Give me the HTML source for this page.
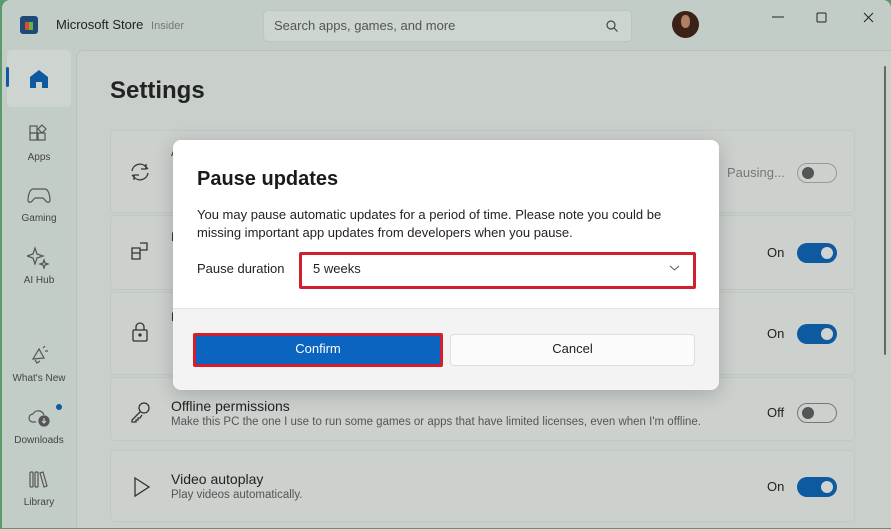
<!DOCTYPE html>
<html><head><style>
*{margin:0;padding:0;box-sizing:border-box}
body{width:891px;height:529px;overflow:hidden;background:#5a9a6a;font-family:"Segoe UI","Liberation Sans",sans-serif;position:relative}
.win{position:absolute;left:2px;top:0;width:889px;height:528px;background:#c3cdc7;border-radius:8px 8px 0 0;overflow:hidden}
.t{position:absolute;white-space:nowrap}
.content{position:absolute;left:74px;top:50px;right:0;bottom:0;background:#c9cfcb;border-top-left-radius:8px;border-top:1px solid #b9c1bc;border-left:1px solid #b9c1bc}
.card{position:absolute;left:108px;width:745px;background:#cdd1ce;border:1px solid #c2c7c4;border-radius:5px}
.tog{position:absolute;width:40px;height:20px;border-radius:10px;background:#0e5aa0}
.tog::after{content:"";position:absolute;right:4px;top:4px;width:12px;height:12px;border-radius:6px;background:#d0d3d1}
.off{background:transparent;border:1px solid #777}
.off::after{left:4px;right:auto;top:3px;background:#555}
.nav{position:absolute;width:74px;text-align:center;font-size:10px;color:#444}
svg{position:absolute}
</style></head><body>
<div class="win">
 <div style="position:absolute;left:18px;top:16px;width:18px;height:18px;background:#1e4a7a;border-radius:3px"></div>
 <div style="position:absolute;left:23px;top:22px;width:8px;height:8px;background:linear-gradient(90deg,#e04a2a 50%,#6ab04a 50%)"></div>
 <div class="t" style="left:54px;top:17px;font-size:13px;color:#222">Microsoft Store <span style="font-size:11px;color:#777;margin-left:4px">Insider</span></div>
 <div style="position:absolute;left:261px;top:10px;width:369px;height:32px;background:#cdd5d0;border:1px solid #bcc5bf;border-radius:5px"></div>
 <div class="t" style="left:272px;top:18px;font-size:13px;color:#555">Search apps, games, and more</div>
 <svg style="left:603px;top:19px" width="14" height="14"><circle cx="6" cy="6" r="4" fill="none" stroke="#444" stroke-width="1.2"/><path d="M9 9l3.5 3.5" stroke="#444" stroke-width="1.2"/></svg>
 <div style="position:absolute;left:670px;top:11px;width:27px;height:27px;border-radius:50%;background:#3a2218"></div>
 <div style="position:absolute;left:679px;top:15px;width:9px;height:13px;border-radius:45%;background:#b08060"></div>
 <svg style="left:768px;top:10px" width="120" height="20"><path d="M2 7h12" stroke="#222"/><rect x="47" y="3" width="9" height="9" fill="none" stroke="#222" rx="1"/><path d="M94 3l9 9M103 3l-9 9" stroke="#222"/></svg>
 <div style="position:absolute;left:5px;top:50px;width:64px;height:57px;background:#ced5d1;border-radius:5px"></div>
 <div style="position:absolute;left:4px;top:67px;width:3px;height:20px;background:#0e5aa0;border-radius:2px"></div>
 <svg style="left:26px;top:68px" width="22" height="22"><path d="M2 9L11 2l9 7v11h-6v-6h-6v6H2z" fill="#0e5aa0"/></svg>
 <svg style="left:26px;top:124px" width="22" height="22" fill="none" stroke="#555" stroke-width="1.2"><rect x="2" y="9" width="7" height="7"/><rect x="10" y="9" width="7" height="7"/><rect x="2" y="2" width="7" height="7"/><path d="M14 1l4 4-4 4-4-4z"/></svg>
 <div class="nav" style="left:0;top:152px">Apps</div>
 <svg style="left:25px;top:186px" width="24" height="20" fill="none" stroke="#555" stroke-width="1.2"><path d="M6 3h12c3 0 5 6 5 11 0 3-3 3-5 0l-2-2H8l-2 2c-2 3-5 3-5 0C1 9 3 3 6 3z"/></svg>
 <div class="nav" style="left:0;top:213px">Gaming</div>
 <svg style="left:25px;top:246px" width="24" height="24" fill="none" stroke="#555" stroke-width="1.2"><path d="M8 2l2 6 6 2-6 2-2 6-2-6-6-2 6-2z"/><path d="M17 14l1 3 3 1-3 1-1 3-1-3-3-1 3-1z"/></svg>
 <div class="nav" style="left:0;top:275px">AI Hub</div>
 <svg style="left:28px;top:345px" width="20" height="20" fill="none" stroke="#555" stroke-width="1.2"><path d="M3 14l6-10 5 9zM5 15l2 3 3-2"/><path d="M13 3l2-2M15 6h3"/></svg>
 <div class="nav" style="left:0;top:373px">What's New</div>
 <svg style="left:26px;top:406px" width="24" height="22" fill="none" stroke="#555" stroke-width="1.2"><path d="M8 16H5a4 4 0 010-8 6 6 0 0111 1"/><circle cx="16" cy="15" r="5" fill="#555"/><path d="M16 12v5M14 15l2 2 2-2" stroke="#ccc"/></svg>
 <div style="position:absolute;left:54px;top:404px;width:6px;height:6px;border-radius:3px;background:#0e5aa0"></div>
 <div class="nav" style="left:0;top:435px">Downloads</div>
 <svg style="left:26px;top:470px" width="22" height="20" fill="none" stroke="#555" stroke-width="1.2"><rect x="2" y="2" width="3" height="15" rx="1"/><rect x="7" y="2" width="3" height="15" rx="1"/><path d="M12 3l3-1 4 14-3 1z"/></svg>
 <div class="nav" style="left:0;top:497px">Library</div>
 <div class="content"></div>
 <div style="position:absolute;left:882px;top:66px;width:2px;height:289px;background:#666;border-radius:1px"></div>
 <div class="t" style="left:108px;top:77px;font-size:24px;font-weight:600;color:#222">Settings</div>
 <div class="card" style="top:130px;height:83px"></div>
 <div class="card" style="top:215px;height:75px"></div>
 <div class="card" style="top:292px;height:83px"></div>
 <div class="card" style="top:377px;height:64px"></div>
 <div class="card" style="top:450px;height:72px"></div>
 <svg style="left:127px;top:161px" width="22" height="22" fill="none" stroke="#333" stroke-width="1.3"><path d="M3 10a8 8 0 0114-4l2 2M19 12a8 8 0 01-14 4l-2-2M17 3v5h-5M5 19v-5h5"/></svg>
 <svg style="left:128px;top:241px" width="20" height="20" fill="none" stroke="#333" stroke-width="1.3"><path d="M2 7h8v11H2zM10 2h7v7h-7M2 12h8M10 7"/></svg>
 <svg style="left:129px;top:321px" width="20" height="22" fill="none" stroke="#333" stroke-width="1.3"><rect x="2" y="9" width="14" height="11" rx="1"/><path d="M5 9V6a4 4 0 018 0v3"/><circle cx="9" cy="14" r="1" fill="#333"/></svg>
 <svg style="left:128px;top:400px" width="22" height="24" fill="none" stroke="#333" stroke-width="1.3"><circle cx="14" cy="8" r="5"/><path d="M10 12L2 20v2h4v-2h2v-2h2l2-3"/></svg>
 <svg style="left:130px;top:476px" width="20" height="22" fill="none" stroke="#333" stroke-width="1.3"><path d="M3 2l14 9-14 9z"/></svg>
 <div class="t" style="left:169px;top:398px;font-size:14px;color:#222">Offline permissions</div>
 <div class="t" style="left:169px;top:416px;font-size:11.5px;color:#555">Make this PC the one I use to run some games or apps that have limited licenses, even when I'm offline.</div>
 <div class="t" style="left:169px;top:471px;font-size:14px;color:#222">Video autoplay</div>
 <div class="t" style="left:169px;top:489px;font-size:11.5px;color:#555">Play videos automatically.</div>
 <div class="t" style="left:725px;top:165px;font-size:13px;color:#777">Pausing...</div>
 <div class="tog off" style="left:795px;top:163px;border-color:#999"></div>
 <div class="t" style="left:765px;top:245px;font-size:13px;color:#222">On</div><div class="tog" style="left:795px;top:243px"></div>
 <div class="t" style="left:765px;top:326px;font-size:13px;color:#222">On</div><div class="tog" style="left:795px;top:324px"></div>
 <div class="t" style="left:765px;top:405px;font-size:13px;color:#222">Off</div><div class="tog off" style="left:795px;top:403px"></div>
 <div class="t" style="left:765px;top:479px;font-size:13px;color:#222">On</div><div class="tog" style="left:795px;top:477px"></div>
 <div class="t" style="left:169px;top:145px;font-size:12px;color:#333">A</div>
 <div class="t" style="left:169px;top:230px;font-size:12px;color:#333">N</div>
 <div class="t" style="left:169px;top:310px;font-size:12px;color:#333">P</div>
</div>
<div style="position:absolute;left:173px;top:140px;width:546px;height:250px;background:#f3f3f3;border-radius:8px;overflow:hidden;box-shadow:0 4px 20px rgba(0,0,0,.2)">
 <div style="position:absolute;left:0;top:0;width:100%;height:169px;background:#fff;border-bottom:1px solid #e3e3e3"></div>
 <div class="t" style="left:24px;top:28px;font-size:20px;font-weight:600;color:#1a1a1a">Pause updates</div>
 <div class="t" style="left:24px;top:66px;font-size:13px;line-height:18px;color:#222">You may pause automatic updates for a period of time. Please note you could be<br>missing important app updates from developers when you pause.</div>
 <div class="t" style="left:24px;top:121px;font-size:13px;color:#222">Pause duration</div>
 <div style="position:absolute;left:126px;top:112px;width:397px;height:37px;border:3px solid #d0202e;border-radius:2px;background:#fff"></div>
 <div class="t" style="left:140px;top:121px;font-size:13px;color:#222">5 weeks</div>
 <svg style="left:496px;top:124px" width="12" height="8"><path d="M1 2l4.5 4L10 2" fill="none" stroke="#555"/></svg>
 <div style="position:absolute;left:20px;top:193px;width:250px;height:34px;border:3px solid #d0202e;border-radius:2px;background:#0a64c0"></div>
 <div class="t" style="left:20px;top:201px;width:250px;text-align:center;font-size:13px;color:#fff">Confirm</div>
 <div style="position:absolute;left:277px;top:194px;width:245px;height:32px;border:1px solid #ddd;border-radius:4px;background:#fbfbfb"></div>
 <div class="t" style="left:277px;top:201px;width:245px;text-align:center;font-size:13px;color:#222">Cancel</div>
</div>
</body></html>
